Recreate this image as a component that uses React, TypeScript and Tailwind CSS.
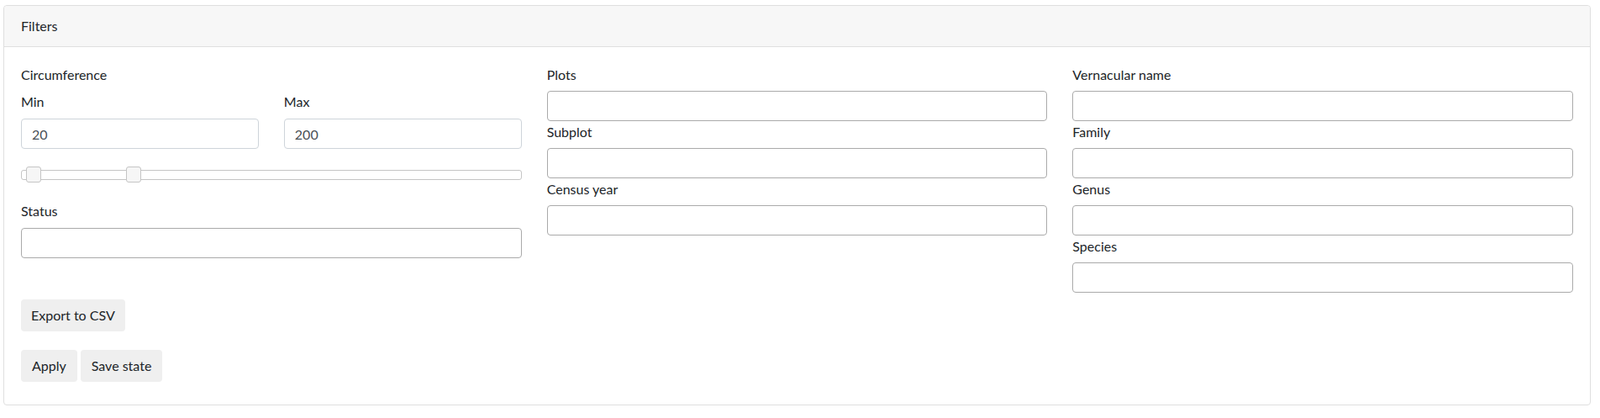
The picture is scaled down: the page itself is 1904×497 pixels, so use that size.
import { useState } from "react";

function SelectBox({ label, last }: { label: string; last?: boolean }) {
  return (
    <div className={last ? "" : "mb-[1px]"}>
      <label className="block leading-6 mb-[7px]">{label}</label>
      <div className="h-[36px] w-full rounded-[4px] border border-[#aaaaaa] bg-white" />
    </div>
  );
}

function RangeSlider() {
  return (
    <div className="relative mt-[25px] h-[12px] w-full rounded-[3px] border border-[#c5c5c5] bg-white">
      <span className="absolute top-[-5px] left-[5px] h-[19px] w-[18px] rounded-[3px] border border-[#c5c5c5] bg-[#f6f6f6]" />
      <span className="absolute top-[-5px] left-[124px] h-[19px] w-[18px] rounded-[3px] border border-[#c5c5c5] bg-[#f6f6f6]" />
    </div>
  );
}

export default function App() {
  const [min, setMin] = useState("20");
  const [max, setMax] = useState("200");

  return (
    <div className="min-h-[497px] bg-white pl-[4px] pt-[6px] font-['Lato','Noto_Sans',sans-serif] text-base text-[#212529]">
      <div className="w-[1889px] rounded-[4px] border border-[#dfdfdf]">
        <div className="border-b border-[#dfdfdf] bg-[#f7f7f7] px-5 py-3 leading-6 rounded-t-[4px]">
          Filters
        </div>

        <div className="px-5 pt-[21px] pb-5">
          <div className="grid grid-cols-3 gap-x-[30px]">
            {/* Circumference + status */}
            <div>
              <label className="block leading-6 mb-[8px]">Circumference</label>
              <div className="grid grid-cols-2 gap-x-[30px]">
                <div>
                  <label className="block leading-6 mb-[8px]">Min</label>
                  <input
                    value={min}
                    onChange={(e) => setMin(e.target.value)}
                    className="h-[36px] w-full rounded-[4px] border border-[#ced4da] px-3 text-[#495057] outline-none"
                  />
                </div>
                <div>
                  <label className="block leading-6 mb-[8px]">Max</label>
                  <input
                    value={max}
                    onChange={(e) => setMax(e.target.value)}
                    className="h-[36px] w-full rounded-[4px] border border-[#ced4da] px-3 text-[#495057] outline-none"
                  />
                </div>
              </div>
              <RangeSlider />
              <label className="mt-[25px] block leading-6 mb-[8px]">Status</label>
              <div className="h-[36px] w-full rounded-[4px] border border-[#aaaaaa] bg-white" />
            </div>

            <div>
              <SelectBox label="Plots" />
              <SelectBox label="Subplot" />
              <SelectBox label="Census year" last />
            </div>

            <div>
              <SelectBox label="Vernacular name" />
              <SelectBox label="Family" />
              <SelectBox label="Genus" />
              <SelectBox label="Species" last />
            </div>
          </div>

          <div className="mt-[8px]">
            <button className="h-[38px] rounded-[4px] bg-[#efefef] px-3 leading-6">
              Export to CSV
            </button>
          </div>
          <div className="mt-[22px] mb-[7px] flex gap-[4px]">
            <button className="h-[38px] rounded-[4px] bg-[#efefef] px-[13px] leading-6">Apply</button>
            <button className="h-[38px] rounded-[4px] bg-[#efefef] px-[13px] leading-6">Save state</button>
          </div>
        </div>
      </div>
    </div>
  );
}
